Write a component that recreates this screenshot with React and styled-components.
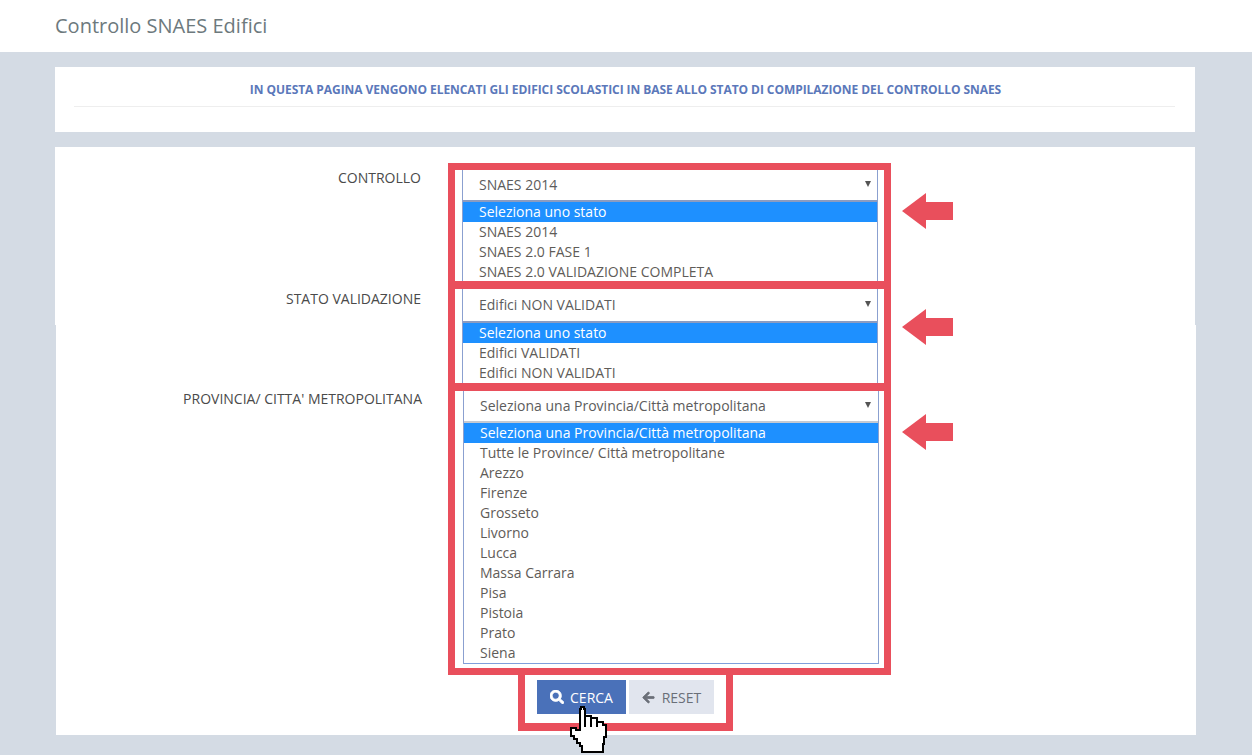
import React from "react";
import styled, { createGlobalStyle } from "styled-components";
import { FaSearch, FaArrowLeft } from "react-icons/fa";

const Global = createGlobalStyle`
  html, body { margin: 0; padding: 0; background: #d4dbe4; }
  body { width: 1252px; height: 755px; overflow: hidden; font-family: "Open Sans", "Liberation Sans", sans-serif; color: #555; }
  * { box-sizing: border-box; }
`;

const TopBar = styled.header`
  height: 52px;
  background: #fff;
  padding-left: 55px;
  display: flex;
  align-items: center;
`;
const Title = styled.h1`
  margin: 0 0 1px;
  font-size: 20px;
  font-weight: 400;
  color: #6d797d;
`;
const Intro = styled.section`
  width: 1140px;
  height: 65px;
  margin: 15px 0 15px 55px;
  padding: 13px 20px 0 19px;
  background: #fff;
`;
const IntroText = styled.p`
  margin: 0;
  height: 27px;
  padding: 1px 0 0 2px;
  border-bottom: 1px solid #eee;
  text-align: center;
  font-size: 12px;
  line-height: 18px;
  font-weight: 700;
  letter-spacing: -0.06px;
  color: #5b78ba;
`;
const FormPanel = styled.form`
  width: 1141px;
  height: 588px;
  margin-left: 55px;
  padding-top: 16px;
  background:
    linear-gradient(#fff, #fff) no-repeat 0 0 / 1140px 178px,
    linear-gradient(#fff, #fff) no-repeat 1px 178px / 1140px 410px;
`;
const Row = styled.div`
  display: grid;
  grid-template-columns: 366px 27px 443px 11px 51px;
  height: ${(p) => p.$height}px;
`;
const Label = styled.label`
  grid-column: 1;
  margin-top: ${(p) => p.$top}px;
  margin-right: ${(p) => p.$right}px;
  font-size: 14px;
  line-height: 20px;
  text-align: right;
  color: #4a4a4a;
`;
const Frame = styled.div`
  grid-column: 3;
  border: solid #e94f5c;
  border-width: ${(p) => (p.$first ? 7 : 0)}px 7px ${(p) => p.$bottom}px;
  overflow: hidden;
  height: ${(p) => p.$height}px;
`;
const SelectBox = styled.div`
  margin: 0 ${(p) => (p.$shift ? 5 : 6)}px 0 ${(p) => (p.$shift ? 8 : 7)}px;
  border-left: 1px solid #8ba0d0;
  border-right: 1px solid #8ba0d0;
`;
const SelectHead = styled.div`
  height: ${(p) => p.$head}px;
  display: flex;
  align-items: center;
  justify-content: space-between;
  padding: 0 ${(p) => (p.$shift ? 7 : 6)}px ${(p) => p.$lift}px 16px;
  border-bottom: 2px solid ${(p) => p.$line};
  font-size: 14px;
  color: #5c5c5c;
`;
const Caret = styled.span`
  width: 0;
  height: 0;
  margin-bottom: 1px;
  border-left: 3.5px solid transparent;
  border-right: 3.5px solid transparent;
  border-top: 6px solid #555;
`;
const OptionList = styled.ul`
  list-style: none;
  margin: 0;
  padding: 0;
  border-bottom: ${(p) => (p.$closed ? "1px solid #7f9fdc" : "none")};
`;
const Option = styled.li`
  height: 20px;
  line-height: 20px;
  padding-left: 16px;
  font-size: 14px;
  white-space: nowrap;
  color: ${(p) => (p.$active ? "#fff" : "#5f5c58")};
  background: ${(p) => (p.$active ? "#1e90ff" : "transparent")};
`;
const ArrowCell = styled.div`
  grid-column: 5;
  padding-top: ${(p) => p.$top}px;
`;
const ActionRow = styled.div`
  margin-left: 463px;
  width: 215px;
  height: 56px;
  position: relative;
  border: solid #e94f5c;
  border-width: 0 7px 8px;
  padding: 5px 0 0 12px;
  display: flex;
  gap: 3px;
  align-items: flex-start;
`;
const Button = styled.button`
  height: 34px;
  width: ${(p) => p.$width}px;
  border: 0;
  padding: 0;
  display: flex;
  align-items: center;
  justify-content: center;
  gap: ${(p) => (p.$primary ? 6 : 7)}px;
  font-family: inherit;
  font-size: 14px;
  color: ${(p) => (p.$primary ? "#fff" : "#6a6f78")};
  background: ${(p) => (p.$primary ? "#4a71b9" : "#e1e5ee")};
  svg { stroke: currentColor; stroke-width: 30px; }
`;
const Cursor = styled.svg`
  position: absolute;
  left: 35px;
  top: 25px;
  width: 60px;
  height: 55px;
`;

const Arrow = () => (
  <svg width="51" height="36" viewBox="0 0 51 36" aria-hidden="true">
    <path d="M0 18 L24 0 V9 H51 V27 H24 V36 Z" fill="#e94f5c" />
  </svg>
);

const Hand = () => (
  <Cursor viewBox="0 0 60 55" aria-hidden="true" shapeRendering="crispEdges">
    <path
      d="M21 7 H24 V9 H25 V16 H31 V18 H37 V22 H43 V25 H46 V37 H44 V44 H43 V52 H22 V46 H20 V43 H17 V39 H14 V36 H11 V28 H16 V30 H20 V9 H21 Z"
      fill="#fff"
      stroke="#000"
      strokeWidth="2"
    />
    <path d="M25 16 V27 M31 18 V27 M37 22 V27" fill="none" stroke="#000" strokeWidth="2" />
  </Cursor>
);

const provinces = [
  "Tutte le Province/ Città metropolitane",
  "Arezzo",
  "Firenze",
  "Grosseto",
  "Livorno",
  "Lucca",
  "Massa Carrara",
  "Pisa",
  "Pistoia",
  "Prato",
  "Siena",
];

const Select = ({ value, head, lift, line, first, options, shift, closed }) => (
  <SelectBox $shift={shift}>
    <SelectHead $head={head} $lift={lift} $line={line} $shift={shift}>
      <span>{value}</span>
      <Caret />
    </SelectHead>
    <OptionList $closed={closed}>
      <Option $active>{first}</Option>
      {options.map((o) => (
        <Option key={o}>{o}</Option>
      ))}
    </OptionList>
  </SelectBox>
);

export default function App() {
  return (
    <>
      <Global />
      <TopBar>
        <Title>Controllo SNAES Edifici</Title>
      </TopBar>
      <Intro>
        <IntroText>IN QUESTA PAGINA VENGONO ELENCATI GLI EDIFICI SCOLASTICI IN BASE ALLO STATO DI COMPILAZIONE DEL CONTROLLO SNAES</IntroText>
      </Intro>
      <FormPanel>
        <Row $height={126}>
          <Label $top={5} $right={0}>CONTROLLO</Label>
          <Frame $first $bottom={8} $height={126}>
            <Select
              value="SNAES 2014"
              head={32}
              lift={1}
              line="#8c9cc0"
              first="Seleziona uno stato"
              options={["SNAES 2014", "SNAES 2.0 FASE 1", "SNAES 2.0 VALIDAZIONE COMPLETA"]}
            />
          </Frame>
          <ArrowCell $top={30}><Arrow /></ArrowCell>
        </Row>
        <Row $height={102}>
          <Label $top={0} $right={0}>STATO VALIDAZIONE</Label>
          <Frame $bottom={8} $height={102}>
            <Select
              value="Edifici NON VALIDATI"
              head={34}
              lift={2}
              line="#8c9cc0"
              first="Seleziona uno stato"
              options={["Edifici VALIDATI", "Edifici NON VALIDATI"]}
            />
          </Frame>
          <ArrowCell $top={20}><Arrow /></ArrowCell>
        </Row>
        <Row $height={284}>
          <Label $top={-2} $right={-1}>PROVINCIA/ CITTA' METROPOLITANA</Label>
          <Frame $bottom={7} $height={284}>
            <Select
              value="Seleziona una Provincia/Città metropolitana"
              head={32}
              lift={1}
              line="#c4c9d2"
              first="Seleziona una Provincia/Città metropolitana"
              options={provinces}
              shift
              closed
            />
          </Frame>
          <ArrowCell $top={23}><Arrow /></ArrowCell>
        </Row>
        <ActionRow>
          <Button $primary $width={89} type="button"><FaSearch size={14} />CERCA</Button>
          <Button $width={85} type="button"><FaArrowLeft size={13} />RESET</Button>
          <Hand />
        </ActionRow>
      </FormPanel>
    </>
  );
}
